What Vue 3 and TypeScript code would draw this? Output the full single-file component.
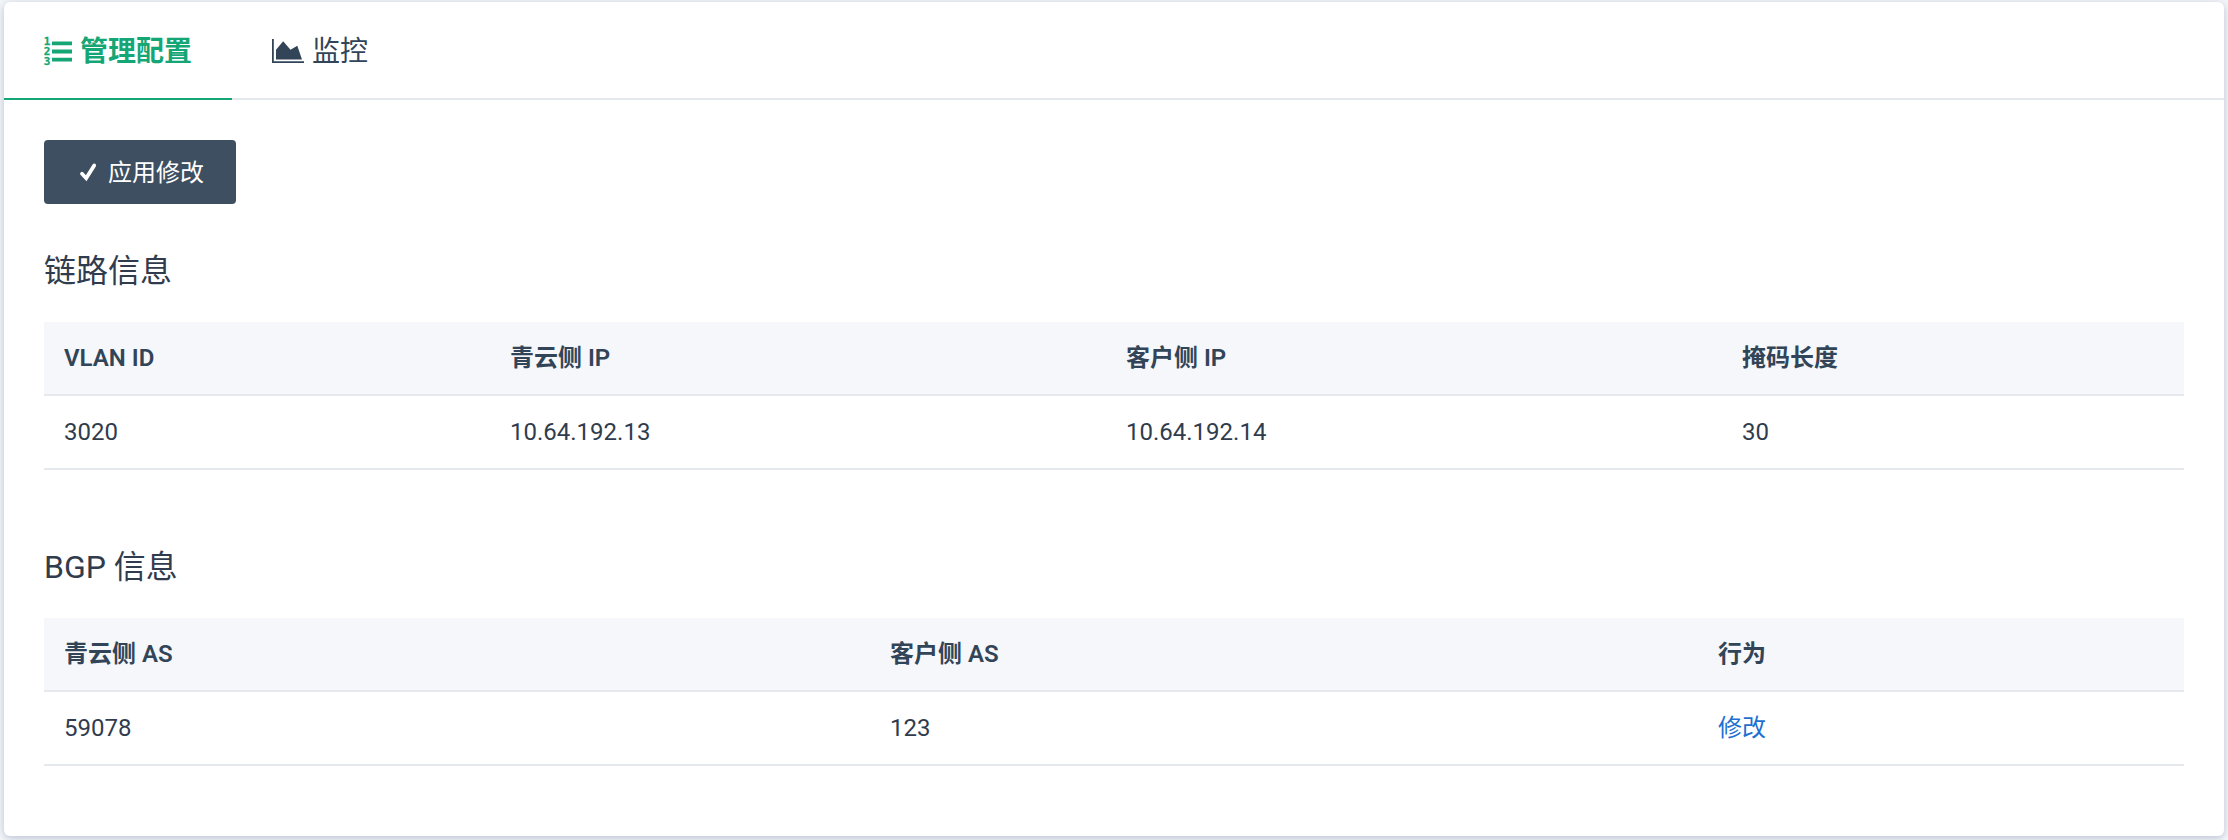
<script setup lang="ts">
import { ref } from 'vue'

type TabKey = 'config' | 'monitor'

interface Table {
  id: string
  title: string
  columns: string[]
  rows: string[][]
  action?: string
}

const active = ref<TabKey>('config')

const tables: Table[] = [
  {
    id: 'link',
    title: '链路信息',
    columns: ['VLAN ID', '青云侧 IP', '客户侧 IP', '掩码长度'],
    rows: [['3020', '10.64.192.13', '10.64.192.14', '30']],
  },
  {
    id: 'bgp',
    title: 'BGP 信息',
    columns: ['青云侧 AS', '客户侧 AS', '行为'],
    rows: [['59078', '123']],
    action: '修改',
  },
]
</script>

<template>
  <main class="page">
    <section class="card">
      <nav class="tabs">
        <button class="tab" :class="{ active: active === 'config' }" @click="active = 'config'">
          <svg class="icon-list" viewBox="0 0 28 32" aria-hidden="true">
            <g class="digits">
              <text x="-0.3" y="11.2">1</text>
              <text x="-0.3" y="21">2</text>
              <text x="-0.3" y="30.8">3</text>
            </g>
            <path d="M8 7.5h20v3.8H8zM8 15.6h20v3.8H8zM8 23.7h20v3.8H8z" />
          </svg>
          <span>管理配置</span>
        </button>
        <button class="tab" :class="{ active: active === 'monitor' }" @click="active = 'monitor'">
          <svg class="icon-chart" viewBox="0 -2 32 28" aria-hidden="true">
            <path d="M0 1h1.8v22.2H32V25H0zM4 21.5v-9.8L11.2 3.2l7.3 8.6 6.8-4.1 4.7 13.8z" />
          </svg>
          <span>监控</span>
        </button>
      </nav>

      <div class="body">
        <button class="apply">
          <svg class="icon-check" viewBox="0 0 16 18" aria-hidden="true">
            <path d="M2 10.8 6.2 15.2 14.2 2.4" />
          </svg>
          <span>应用修改</span>
        </button>

        <section v-for="table in tables" :key="table.id" class="block">
          <h2>{{ table.title }}</h2>
          <div class="table" :class="table.id">
            <div class="row head">
              <div v-for="column in table.columns" :key="column">{{ column }}</div>
            </div>
            <div v-for="(row, index) in table.rows" :key="index" class="row">
              <div v-for="cell in row" :key="cell">{{ cell }}</div>
              <div v-if="table.action"><a>{{ table.action }}</a></div>
            </div>
          </div>
        </section>
      </div>
    </section>
  </main>
</template>

<style>
body {
  margin: 0;
  overflow: hidden;
}
</style>

<style scoped>
.page {
  box-sizing: border-box;
  height: 840px;
  padding: 2px 4px 4px;
  background: #f5f7fa;
  color: #303c4d;
  font-family: Roboto, 'Noto Sans CJK SC', sans-serif;
  font-size: 24px;
}

.card {
  height: 834px;
  border-radius: 6px;
  background: #fff;
  box-shadow: 0 2px 8px rgba(53, 74, 120, 0.32);
}

button {
  margin: 0;
  border: 0;
  background: none;
  color: #324558;
  font: inherit;
  cursor: pointer;
}

.tabs {
  display: flex;
  box-sizing: border-box;
  height: 98px;
  border-bottom: 2px solid #e5e9ed;
}

.tab {
  display: flex;
  box-sizing: border-box;
  height: 98px;
  align-items: center;
  gap: 8px;
  padding: 0 40px;
  border-bottom: 2px solid transparent;
  font-size: 28px;
  line-height: 40px;
}

.tab span {
  padding-top: 3px;
}

.tab.active {
  border-bottom-color: #15a675;
  color: #15a675;
  font-weight: 600;
}

svg {
  display: block;
  flex: none;
  overflow: visible;
  fill: currentColor;
}

.icon-list {
  width: 28px;
  height: 32px;
}

.digits {
  font: 700 11px 'DejaVu Sans Mono', monospace;
  stroke: currentColor;
  stroke-width: 0.3;
}

.icon-chart {
  width: 32px;
  height: 28px;
}

.body {
  padding: 40px;
}

.apply {
  display: flex;
  width: 192px;
  height: 64px;
  align-items: center;
  gap: 12px;
  padding: 0 0 0 36px;
  border-radius: 4px;
  background: #3d4f61;
  color: #fff;
}

.apply span {
  padding-bottom: 4px;
}

.icon-check {
  width: 16px;
  height: 18px;
  fill: none;
  stroke: currentColor;
  stroke-width: 3.8;
  stroke-linecap: round;
}

.block {
  padding-top: 43px;
}

.block + .block {
  padding-top: 73px;
}

h2 {
  margin: 0 0 27px;
  font-size: 32px;
  font-weight: 400;
  line-height: 48px;
}

.row {
  display: grid;
  border-bottom: 2px solid #e5e9ed;
  line-height: 72px;
}

.row > div {
  padding-left: 20px;
}

.link .row {
  grid-template-columns: 446px 616px 616px 1fr;
}

.bgp .row {
  grid-template-columns: 826px 828px 1fr;
}

.head {
  background: #f5f7fa;
  color: #324558;
  font-weight: 600;
}

a {
  color: #1e6fcf;
  cursor: pointer;
}
</style>
